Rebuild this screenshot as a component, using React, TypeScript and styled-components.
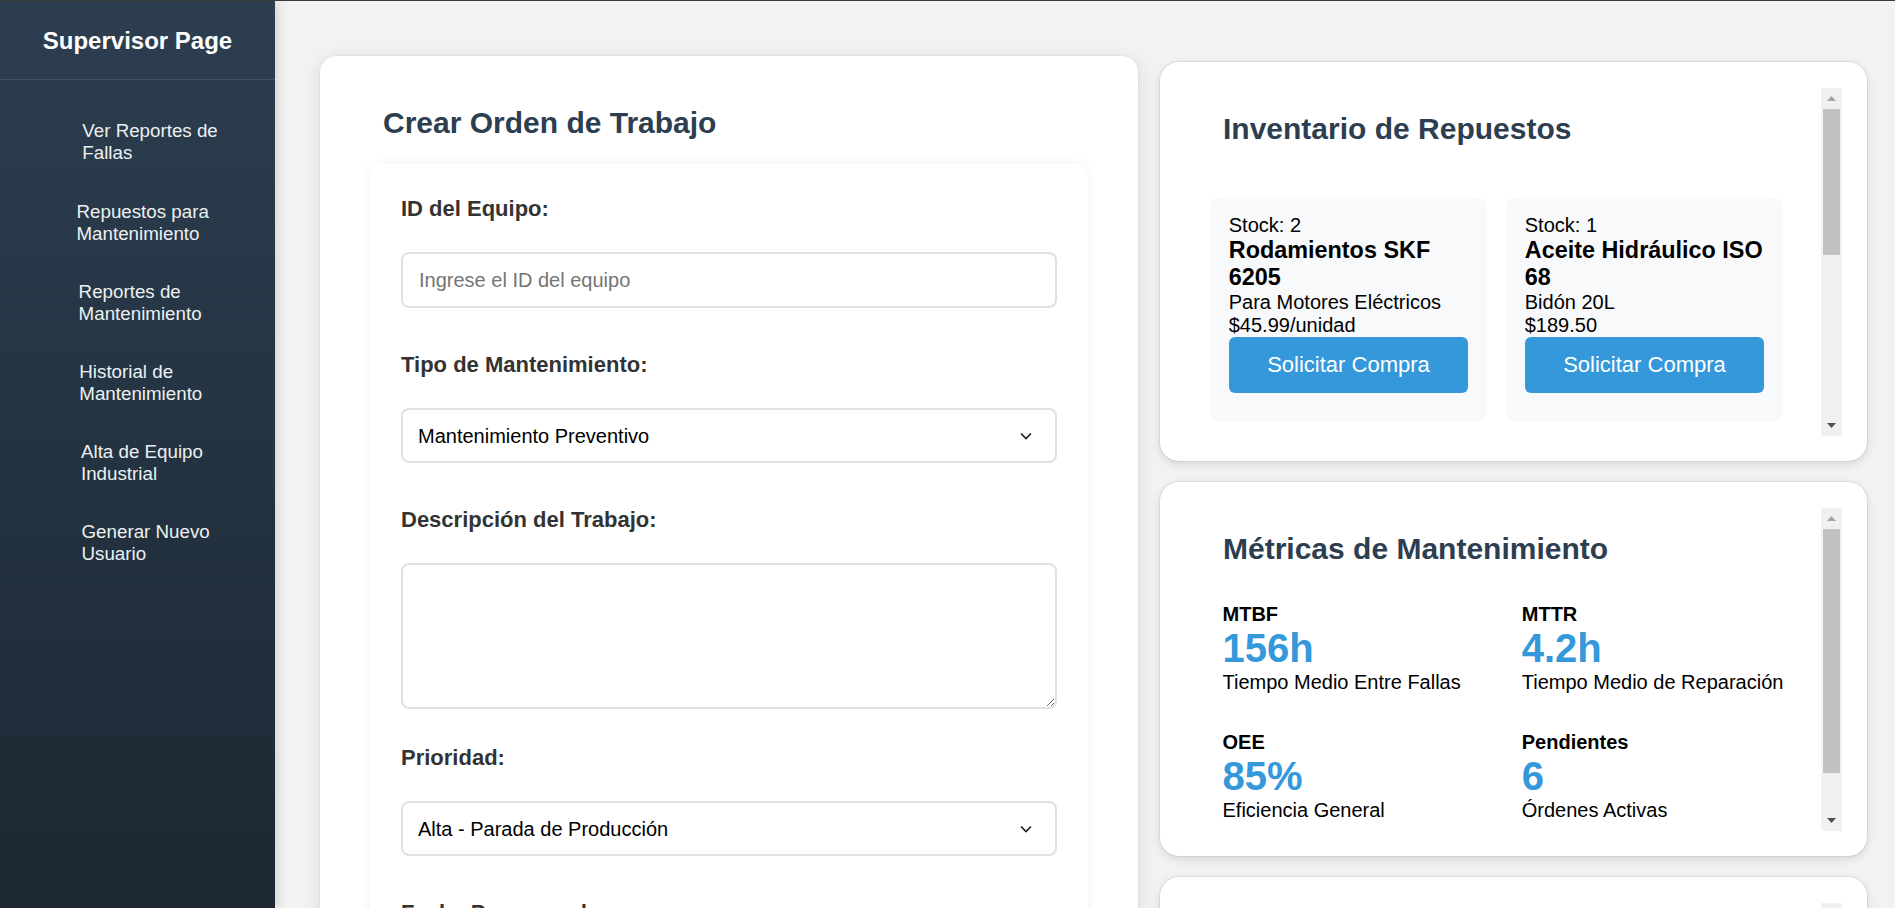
import React from 'react';
import styled, { createGlobalStyle } from 'styled-components';

const GlobalStyle = createGlobalStyle`
  * { box-sizing: border-box; }
  html, body { margin: 0; padding: 0; height: 100%; overflow: hidden; }
  body {
    font-family: "Liberation Sans", Arial, Helvetica, sans-serif;
    border-top: 1px solid #3a3a3a;
    background: #f2f2f2;
  }
`;

const Layout = styled.div`
  display: flex;
  height: calc(100vh - 1px);
  overflow: hidden;
`;

const Sidebar = styled.aside`
  width: 275px;
  flex-shrink: 0;
  display: flex;
  flex-direction: column;
  background: linear-gradient(180deg, #2c3e50 0%, #1c2833 100%);
  box-shadow: 2px 0 10px rgba(0, 0, 0, 0.15);
  position: relative;
  z-index: 1;
`;

const SidebarHeader = styled.div`
  padding: 26px 0 24.4px;
  border-bottom: 1px solid rgba(255, 255, 255, 0.1);
  text-align: center;
`;

const Brand = styled.h1`
  margin: 0;
  font-size: 24px;
  font-weight: 700;
  color: #ffffff;
`;

const Nav = styled.nav`
  display: flex;
  flex-direction: column;
  gap: 12.2px;
  padding: 28px 33px;
`;

const NavLink = styled.a`
  display: flex;
  gap: 10px;
  padding: 12px 15px;
  color: #ecf0f1;
  font-size: 18.75px;
  line-height: 22px;
  text-decoration: none;
  border-radius: 6px;
  cursor: pointer;
`;

const NavIcon = styled.span`
  width: 32px;
`;

const NavText = styled.span``;

const Main = styled.main`
  flex: 1;
  min-width: 0;
  padding: 55px 28px 0 45px;
  display: grid;
  grid-template-columns: 818px 1fr;
  column-gap: 22px;
  align-items: start;
  overflow: hidden;
`;

const FormPanel = styled.section`
  background: #ffffff;
  border-radius: 16px;
  padding: 50px;
  box-shadow: 0 4px 20px rgba(0, 0, 0, 0.1), 0 0 0 1px rgba(0, 0, 0, 0.03);
`;

const PanelTitle = styled.h2`
  margin: 0 0 24px 13px;
  font-size: 30px;
  font-weight: 700;
  color: #2c3e50;
`;

const FormCard = styled.form`
  background: #ffffff;
  border-radius: 12px;
  padding: 32px 31px;
  box-shadow: 0 0 12px rgba(0, 0, 0, 0.06);
`;

const FormGroup = styled.div`
  margin-bottom: 44px;
`;

const Label = styled.label`
  display: block;
  margin-bottom: 30px;
  font-size: 22px;
  font-weight: 700;
  color: #333333;
`;

const controlBase = `
  display: block;
  width: 100%;
  border: 2px solid #e1e1e1;
  border-radius: 8px;
  background: #ffffff;
  font-family: inherit;
  font-size: 20px;
  color: #000000;
  outline: none;
`;

const Input = styled.input`
  ${controlBase}
  height: 56px;
  padding: 0 16px;
  &::placeholder { color: #757575; }
`;

const SelectWrap = styled.div`
  position: relative;
`;

const Select = styled.select`
  ${controlBase}
  height: 55px;
  padding: 0 15px;
  appearance: none;
  -webkit-appearance: none;
`;

const Chevron = styled.svg`
  position: absolute;
  right: 25px;
  top: 50%;
  transform: translateY(-50%);
  pointer-events: none;
`;

const TextArea = styled.textarea`
  ${controlBase}
  height: 146px;
  padding: 15px 16px;
  margin-bottom: -8px;
  resize: vertical;
`;

const SideColumn = styled.div`
  display: flex;
  flex-direction: column;
  gap: 21px;
  padding-top: 6px;
`;

const WidgetCard = styled.section`
  background: #ffffff;
  border-radius: 19px;
  padding: 26px 25px 25px;
  box-shadow: 0 3px 10px rgba(0, 0, 0, 0.12), 0 0 0 1px rgba(0, 0, 0, 0.06);
`;

const ScrollArea = styled.div<{ $height: number }>`
  display: flex;
  height: ${(p) => p.$height}px;
`;

const ScrollContent = styled.div`
  flex: 1;
  min-width: 0;
  overflow: hidden;
  padding: 24px 25px 25px;
`;

const Scrollbar = styled.div`
  width: 21px;
  flex-shrink: 0;
  display: flex;
  flex-direction: column;
  background: #f1f1f1;
`;

const ScrollButton = styled.div`
  height: 21px;
  flex-shrink: 0;
  display: flex;
  align-items: center;
  justify-content: center;
`;

const ScrollThumb = styled.div<{ $size: number }>`
  height: ${(p) => p.$size}px;
  margin: 0 2px;
  background: #c1c1c1;
  flex-shrink: 0;
`;

const ScrollSpacer = styled.div`
  flex: 1;
`;

const PartsGrid = styled.div`
  display: grid;
  grid-template-columns: repeat(2, 277px);
  gap: 19px;
  padding-top: 27px;
`;

const PartCard = styled.div`
  display: flex;
  flex-direction: column;
  background: #f8f9fa;
  border-radius: 10px;
  padding: 17px 18.75px 29px;
  color: #000000;
`;

const Stock = styled.span`
  font-size: 20px;
`;

const PartName = styled.h3`
  margin: 0;
  font-size: 23.4px;
  font-weight: 700;
`;

const PartMeta = styled.p`
  margin: 0;
  font-size: 20px;
`;

const BuyButton = styled.button`
  width: 100%;
  padding: 15px;
  border: none;
  border-radius: 6px;
  background: #3498db;
  color: #ffffff;
  font-family: inherit;
  font-size: 22px;
  cursor: pointer;
`;

const MetricsGrid = styled.div`
  display: grid;
  grid-template-columns: repeat(2, 1fr);
  gap: 12.5px;
`;

const MetricItem = styled.div`
  padding: 12.5px 6px 12.5px 12.5px;
  color: #000000;
`;

const MetricLabel = styled.div`
  font-size: 20px;
  font-weight: 700;
`;

const MetricValue = styled.div`
  font-size: 40px;
  font-weight: 700;
  color: #3498db;
`;

const MetricDesc = styled.div`
  font-size: 20px;
`;

const navItems = [
  'Ver Reportes de Fallas',
  'Repuestos para Mantenimiento',
  'Reportes de Mantenimiento',
  'Historial de Mantenimiento',
  'Alta de Equipo Industrial',
  'Generar Nuevo Usuario',
];

const parts = [
  { stock: 2, name: 'Rodamientos SKF 6205', detail: 'Para Motores Eléctricos', price: '$45.99/unidad' },
  { stock: 1, name: 'Aceite Hidráulico ISO 68', detail: 'Bidón 20L', price: '$189.50' },
];

const metrics = [
  { label: 'MTBF', value: '156h', desc: 'Tiempo Medio Entre Fallas' },
  { label: 'MTTR', value: '4.2h', desc: 'Tiempo Medio de Reparación' },
  { label: 'OEE', value: '85%', desc: 'Eficiencia General' },
  { label: 'Pendientes', value: '6', desc: 'Órdenes Activas' },
];

const FakeScrollbar: React.FC<{ thumb: number }> = ({ thumb }) => (
  <Scrollbar aria-hidden="true">
    <ScrollButton>
      <svg width="9" height="5" viewBox="0 0 9 5">
        <polygon points="0,5 4.5,0 9,5" fill="#a3a3a3" />
      </svg>
    </ScrollButton>
    <ScrollThumb $size={thumb} />
    <ScrollSpacer />
    <ScrollButton>
      <svg width="9" height="5" viewBox="0 0 9 5">
        <polygon points="0,0 9,0 4.5,5" fill="#505050" />
      </svg>
    </ScrollButton>
  </Scrollbar>
);

const ChevronIcon = () => (
  <Chevron width="12" height="8" viewBox="0 0 12 8">
    <polyline points="1,1.5 6,6.5 11,1.5" fill="none" stroke="#222" strokeWidth="1.7" />
  </Chevron>
);

export default function App() {
  return (
    <>
      <GlobalStyle />
      <Layout>
        <Sidebar>
          <SidebarHeader>
            <Brand>Supervisor Page</Brand>
          </SidebarHeader>
          <Nav>
            {navItems.map((item) => (
              <NavLink key={item}>
                <NavIcon aria-hidden="true" />
                <NavText>{item}</NavText>
              </NavLink>
            ))}
          </Nav>
        </Sidebar>

        <Main>
          <FormPanel>
            <PanelTitle>Crear Orden de Trabajo</PanelTitle>
            <FormCard onSubmit={(e) => e.preventDefault()}>
              <FormGroup>
                <Label htmlFor="equipo">ID del Equipo:</Label>
                <Input id="equipo" type="text" placeholder="Ingrese el ID del equipo" />
              </FormGroup>
              <FormGroup>
                <Label htmlFor="tipo">Tipo de Mantenimiento:</Label>
                <SelectWrap>
                  <Select id="tipo" defaultValue="preventivo">
                    <option value="preventivo">Mantenimiento Preventivo</option>
                    <option value="correctivo">Mantenimiento Correctivo</option>
                    <option value="predictivo">Mantenimiento Predictivo</option>
                  </Select>
                  <ChevronIcon />
                </SelectWrap>
              </FormGroup>
              <FormGroup>
                <Label htmlFor="descripcion">Descripción del Trabajo:</Label>
                <TextArea id="descripcion" />
              </FormGroup>
              <FormGroup>
                <Label htmlFor="prioridad">Prioridad:</Label>
                <SelectWrap>
                  <Select id="prioridad" defaultValue="alta">
                    <option value="alta">Alta - Parada de Producción</option>
                    <option value="media">Media</option>
                    <option value="baja">Baja</option>
                  </Select>
                  <ChevronIcon />
                </SelectWrap>
              </FormGroup>
              <FormGroup>
                <Label htmlFor="fecha">Fecha Programada:</Label>
                <Input id="fecha" type="text" />
              </FormGroup>
            </FormCard>
          </FormPanel>

          <SideColumn>
            <WidgetCard>
              <ScrollArea $height={348}>
                <ScrollContent>
                  <PanelTitle>Inventario de Repuestos</PanelTitle>
                  <PartsGrid>
                    {parts.map((p) => (
                      <PartCard key={p.name}>
                        <Stock>Stock: {p.stock}</Stock>
                        <PartName>{p.name}</PartName>
                        <PartMeta>{p.detail}</PartMeta>
                        <PartMeta>{p.price}</PartMeta>
                        <BuyButton type="button">Solicitar Compra</BuyButton>
                      </PartCard>
                    ))}
                  </PartsGrid>
                </ScrollContent>
                <FakeScrollbar thumb={146} />
              </ScrollArea>
            </WidgetCard>

            <WidgetCard>
              <ScrollArea $height={323}>
                <ScrollContent>
                  <PanelTitle>Métricas de Mantenimiento</PanelTitle>
                  <MetricsGrid>
                    {metrics.map((m) => (
                      <MetricItem key={m.label}>
                        <MetricLabel>{m.label}</MetricLabel>
                        <MetricValue>{m.value}</MetricValue>
                        <MetricDesc>{m.desc}</MetricDesc>
                      </MetricItem>
                    ))}
                  </MetricsGrid>
                </ScrollContent>
                <FakeScrollbar thumb={244} />
              </ScrollArea>
            </WidgetCard>

            <WidgetCard>
              <ScrollArea $height={323}>
                <ScrollContent>
                  <PanelTitle>Órdenes Activas</PanelTitle>
                </ScrollContent>
                <FakeScrollbar thumb={200} />
              </ScrollArea>
            </WidgetCard>
          </SideColumn>
        </Main>
      </Layout>
    </>
  );
}
